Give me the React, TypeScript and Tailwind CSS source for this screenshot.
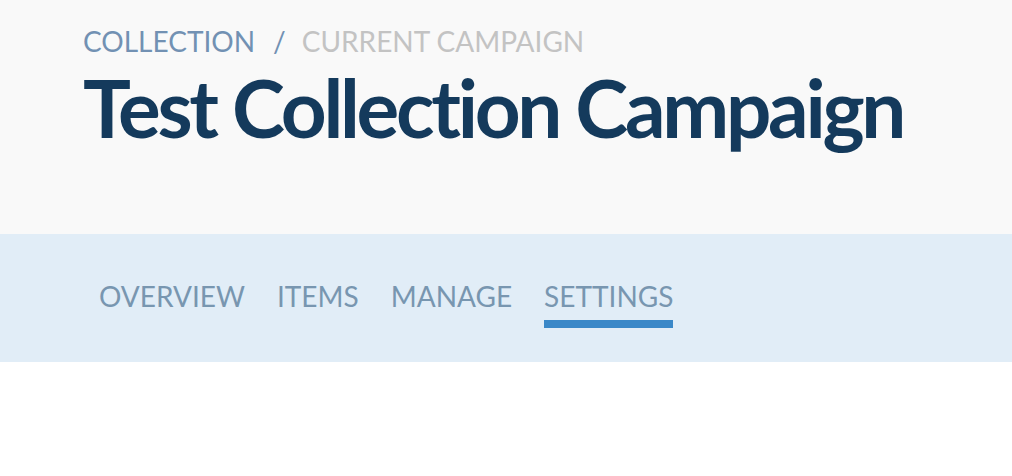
export default function App() {
  return (
    <div className="w-[1012px] h-[476px] bg-white" style={{ fontFamily: "Lato, 'Noto Sans', sans-serif" }}>
      <div className="h-[234px] bg-[#f9f9f9] pl-[83px] pt-[25px]">
        <div className="flex items-center text-[28px] leading-[32px] uppercase">
          <span className="text-[#7291b3]">Collection</span>
          <span className="text-[#7291b3] ml-[18px] mr-[16px]">/</span>
          <span className="text-[#c3c3c3]">Current Campaign</span>
        </div>
        <h1 className="text-[80px] leading-[96px] font-bold tracking-[-3.3px] text-[#143a5c] mt-[2px]">Test Collection Campaign</h1>
      </div>
      <div className="h-[128px] bg-[#e1edf7] pl-[99px] flex items-start pt-[46px] gap-[32px]">
        {["Overview", "Items", "Manage", "Settings"].map((t, i) => (
          <div key={t} className="flex flex-col">
            <span className="text-[28px] leading-[32px] uppercase text-[#7896b0]">{t}</span>
            {i === 3 && <div className="h-[8px] bg-[#3a88c8] mt-[8px]" />}
          </div>
        ))}
      </div>
    </div>
  );
}
